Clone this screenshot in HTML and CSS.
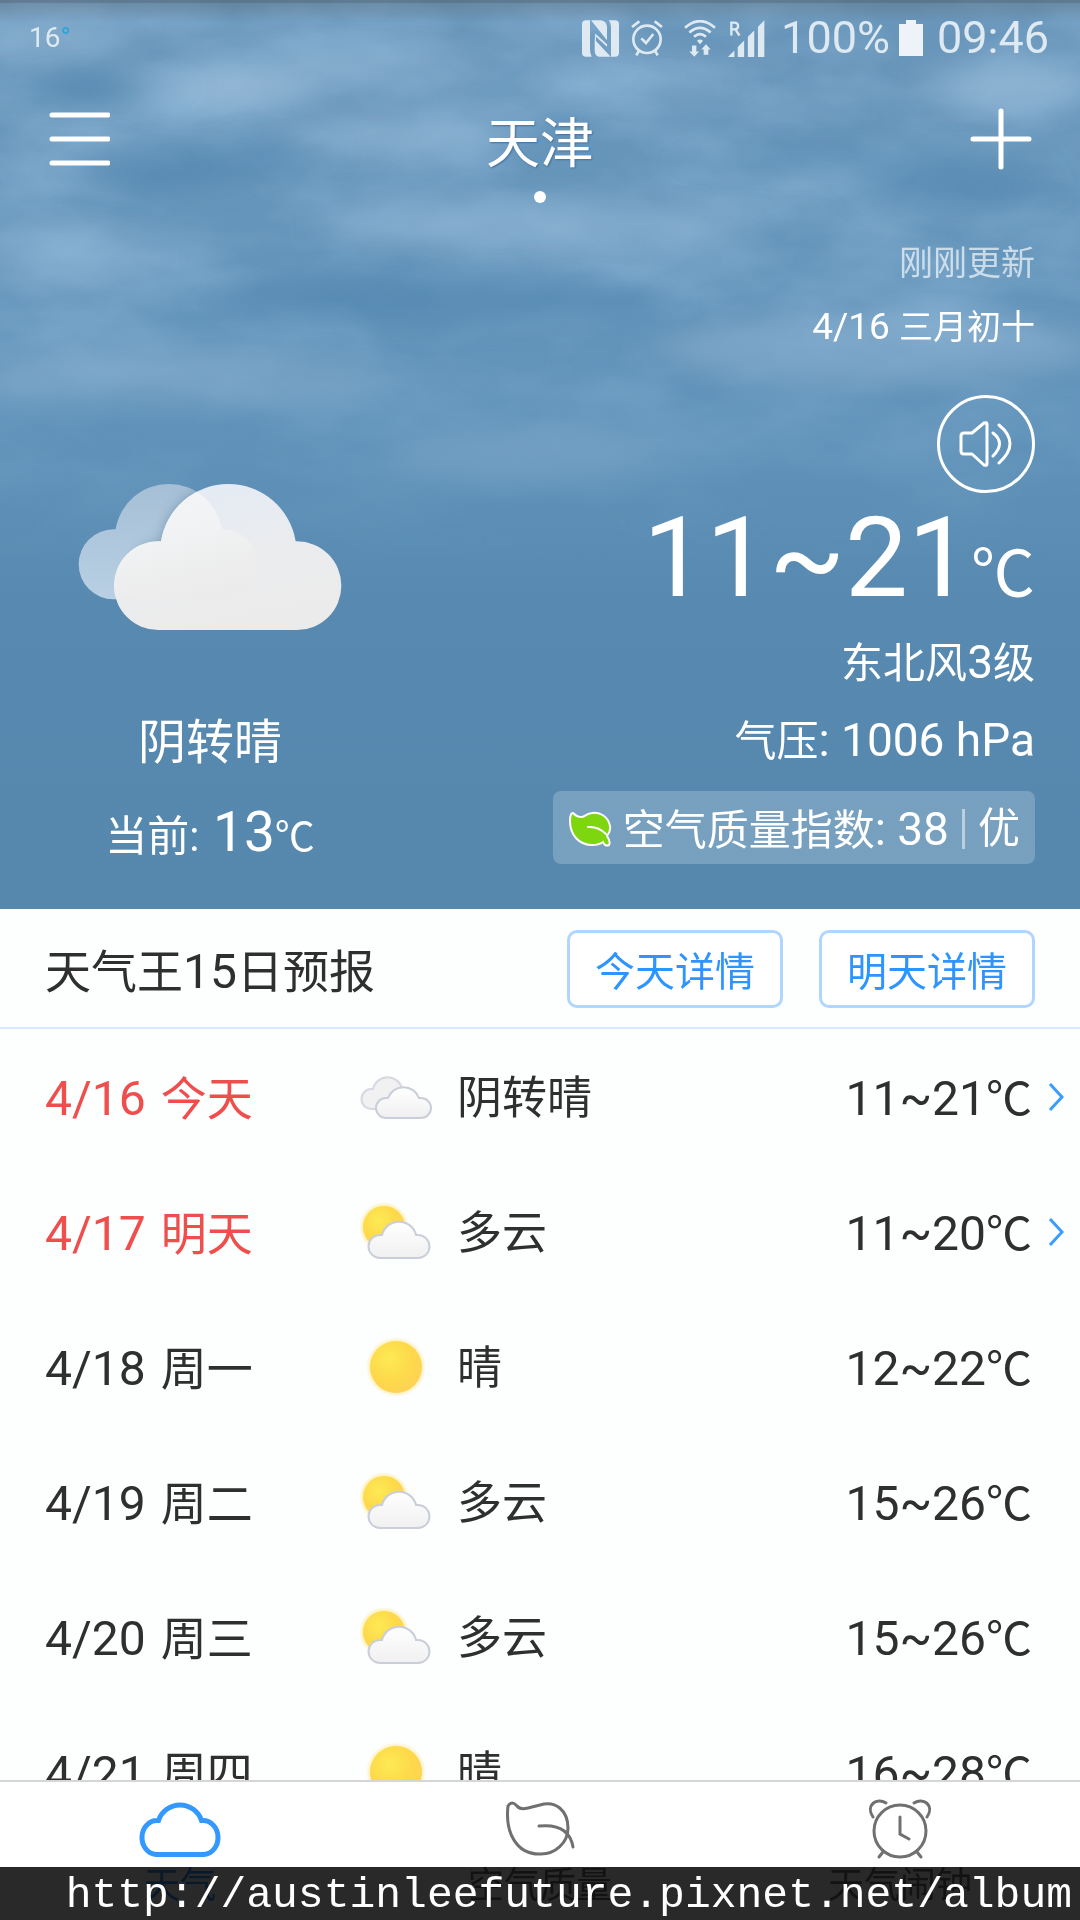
FILE: index.html
```html
<!DOCTYPE html>
<html lang="zh-CN">
<head>
<meta charset="utf-8">
<meta name="viewport" content="width=device-width, initial-scale=1">
<title>天气王 - 天津</title>
<link rel="stylesheet" href="styles.css">
</head>
<body>
<svg class="defs" aria-hidden="true">
  <defs>
    <linearGradient id="puff" x1="0" y1="0" x2="0" y2="1"><stop offset="0" stop-color="#fff"/><stop offset="1" stop-color="#f0f0f0"/></linearGradient>
    <radialGradient id="sunfill" cx=".38" cy=".35" r=".7"><stop offset="0" stop-color="#fdea55"/><stop offset=".6" stop-color="#fdd94a"/><stop offset="1" stop-color="#fed257"/></radialGradient>
    <radialGradient id="glow"><stop offset=".84" stop-color="#ffe680" stop-opacity=".6"/><stop offset="1" stop-color="#ffe680" stop-opacity="0"/></radialGradient>
    <symbol id="overcast" viewBox="0 0 72 60">
      <path d="M12 42a10 10 0 0 1-1-20h2a15 15 0 0 1 29-1l4 21z" fill="#f1f1f1" stroke="#d5d9e1" stroke-width="2"/>
      <path d="M26 51a10 10 0 0 1 0-20h2a16.500 16.500 0 0 1 31 0h2a10 10 0 0 1 0 20z" fill="url(#puff)" stroke="#c9ced9" stroke-width="2"/>
    </symbol>
    <symbol id="cloudy" viewBox="0 0 72 60">
      <circle cx="24" cy="25" r="25" fill="url(#glow)"/>
      <circle cx="24" cy="25" r="21" fill="url(#sunfill)"/>
      <path d="M20 56a11.500 11.500 0 0 1 0-23h2a17.500 17.500 0 0 1 34 0h2a11.500 11.500 0 0 1 0 23z" fill="url(#puff)" stroke="#c9ced9" stroke-width="2"/>
    </symbol>
    <symbol id="sunny" viewBox="0 0 72 60">
      <circle cx="36" cy="30" r="30" fill="url(#glow)"/>
      <circle cx="36" cy="30" r="26" fill="url(#sunfill)"/>
    </symbol>
  </defs>
</svg>

<div class="app">
  <header class="hero">
    <svg class="sky" viewBox="0 0 1080 909" preserveAspectRatio="none" aria-hidden="true">
      <defs>
        <linearGradient id="base" x1="0" y1="0" x2="0" y2="1"><stop offset="0" stop-color="#6996ba"/><stop offset=".3" stop-color="#6595bb"/><stop offset=".5" stop-color="#6092b9"/><stop offset=".66" stop-color="#588ab1"/><stop offset="1" stop-color="#5688ae"/></linearGradient>
        <linearGradient id="fade" x1="0" y1="0" x2="0" y2="1"><stop offset="0" stop-color="#fff"/><stop offset=".35" stop-color="#ddd"/><stop offset=".62" stop-color="#000"/></linearGradient>
        <linearGradient id="shade" x1="0" y1="0" x2="0" y2="1"><stop offset="0" stop-color="#555" stop-opacity=".3"/><stop offset="1" stop-color="#555" stop-opacity="0"/></linearGradient>
        <mask id="fadeMask"><rect width="1080" height="909" fill="url(#fade)"/></mask>
        <filter id="wisps" x="0" y="0" width="1" height="1" color-interpolation-filters="sRGB">
          <feTurbulence type="fractalNoise" baseFrequency=".006 .013" numOctaves="4" seed="7"/>
          <feColorMatrix values="0 0 0 0 .57  0 0 0 0 .73  0 0 0 0 .86  2.200 0 0 0 -.75"/>
        </filter>
        <filter id="soft" x="-1" y="-1" width="3" height="3"><feGaussianBlur stdDeviation="24 12"/></filter>
      </defs>
      <rect width="1080" height="909" fill="url(#base)"/>
      <g mask="url(#fadeMask)">
        <rect width="1080" height="909" filter="url(#wisps)" opacity=".55"/>
        <g filter="url(#soft)" fill="#a3c3de">
          <ellipse cx="225" cy="88" rx="100" ry="26" opacity=".65"/>
          <ellipse cx="370" cy="65" rx="110" ry="18" opacity=".35"/>
          <ellipse cx="40" cy="40" rx="80" ry="22" opacity=".4"/>
          <ellipse cx="1010" cy="86" rx="80" ry="26" opacity=".6"/>
          <ellipse cx="400" cy="135" rx="110" ry="22" opacity=".45"/>
          <ellipse cx="640" cy="75" rx="90" ry="20" opacity=".3"/>
          <ellipse cx="540" cy="225" rx="200" ry="26" opacity=".45"/>
          <ellipse cx="60" cy="255" rx="80" ry="30" opacity=".4"/>
          <ellipse cx="880" cy="350" rx="220" ry="34" opacity=".45"/>
          <ellipse cx="170" cy="380" rx="220" ry="28" opacity=".4"/>
          <ellipse cx="530" cy="460" rx="140" ry="28" opacity=".6"/>
        </g>
        <g filter="url(#soft)" fill="#4f84ae">
          <ellipse cx="90" cy="88" rx="80" ry="12" opacity=".6"/>
          <ellipse cx="160" cy="170" rx="80" ry="20" opacity=".6"/>
          <ellipse cx="270" cy="155" rx="40" ry="18" opacity=".6"/>
          <ellipse cx="860" cy="160" rx="180" ry="12" opacity=".45"/>
          <ellipse cx="960" cy="190" rx="90" ry="18" opacity=".5"/>
          <ellipse cx="440" cy="300" rx="220" ry="26" opacity=".6"/>
        </g>
      </g>
      <rect width="1080" height="22" fill="url(#shade)"/>
      <rect width="1080" height="3" fill="#44596a" opacity=".3"/>
    </svg>

    <div class="status">
      <span class="status-temp">16<i>°</i></span>
      <div class="status-icons">
        <svg class="s-nfc" viewBox="0 0 111 110" fill="currentColor"><path d="M12 0H24V86Q24 102 29 110H12Q0 110 0 98V12Q0 0 12 0ZM27 0H56Q74 2 75 20V60ZM38 58L86 110H50Q38 106 38 90ZM99 0H80Q87 8 87 24V110H99Q111 110 111 98V12Q111 0 99 0ZM40 40L75 72V80L42 50V62H38Z"/></svg>
        <svg class="s-alarm" viewBox="0 0 96 108" fill="none" stroke="currentColor" stroke-width="8"><circle cx="48" cy="58" r="41"/><path d="M31 55l14 14 22-27M3 21L25 4M71 4l22 17M24 92L16 106M72 92l8 14"/></svg>
        <svg class="s-wifi" viewBox="0 0 96 110" fill="none" stroke="currentColor" stroke-width="8"><path d="M3 23q45-40 90 0M16 37q32-28 64 0M30 50q18-16 36 0"/><path fill="currentColor" stroke="none" d="M39 62q9-8 18 0l-9 10zM24 76h13v18h8l-14 16-15-16h8zM59 104V88h-7l14-16 14 16h-7v16z"/></svg>
        <svg class="s-signal" viewBox="0 0 110 110" fill="currentColor"><path d="M0 110l19-19v19zM29 80l19-19v49H29zM59 50l19-19v79H59zM89 20l19-19v109H89z"/><path fill="none" stroke="currentColor" stroke-width="7" d="M10 46V8h8q12 0 12 10t-12 10h-8M22 28l12 18"/></svg>
        <span class="status-text">100%</span>
        <svg class="s-battery" viewBox="0 0 24 36" fill="#edf3f9"><path d="M7 0h10v4h7v32H0V4h7z"/></svg>
        <span class="status-text">09:46</span>
      </div>
    </div>

    <div class="appbar">
      <button class="icon-btn" aria-label="菜单"><svg viewBox="0 0 62 62"><path d="M4 7h56M4 31h56M4 55h56" stroke="#fff" stroke-width="5" stroke-linecap="round"/></svg></button>
      <div class="city"><h1>天津</h1><span class="dot"></span></div>
      <button class="icon-btn" aria-label="添加城市"><svg viewBox="0 0 62 62"><path d="M3 31h56M31 3v56" stroke="#fff" stroke-width="5" stroke-linecap="round"/></svg></button>
    </div>

    <div class="now">
      <section class="current">
        <svg class="big-cloud" viewBox="57 66 792 450" aria-hidden="true">
          <defs>
            <linearGradient id="bk" x1="0" y1="0" x2="0" y2="1"><stop offset="0" stop-color="#a5bfd6"/><stop offset="1" stop-color="#b9d0e3"/></linearGradient>
            <linearGradient id="fr" x1=".2" y1="0" x2=".5" y2="1"><stop offset="0" stop-color="#e3ebf5"/><stop offset=".55" stop-color="#ebecee"/><stop offset="1" stop-color="#ebebeb"/></linearGradient>
            <linearGradient id="ov" x1=".2" y1="0" x2=".6" y2="1"><stop offset="0" stop-color="#f4f5f7"/><stop offset=".5" stop-color="#f1f2f3"/><stop offset="1" stop-color="#ebebeb"/></linearGradient>
            <clipPath id="frc"><path d="M298 510A133 133 0 0 1 298 244H306A204.600 204.600 0 0 1 710 244H714A133 133 0 0 1 714 510Z"/></clipPath>
            <clipPath id="bkc"><path id="bkp" d="M164 418A105 105 0 0 1 164 208H170A161.500 161.500 0 0 1 489 208H490A105 105 0 0 1 490 418Z"/></clipPath>
            <filter id="sh" x="-.3" y="-.3" width="1.600" height="1.600"><feGaussianBlur stdDeviation="18"/></filter>
          </defs>
          <use href="#bkp" fill="url(#bk)"/>
          <g clip-path="url(#bkc)"><path d="M298 500A133 133 0 0 1 298 244H306A204.600 204.600 0 0 1 710 244Z" fill="#5b7f9d" opacity=".6" filter="url(#sh)"/></g>
          <path d="M298 510A133 133 0 0 1 298 244H306A204.600 204.600 0 0 1 710 244H714A133 133 0 0 1 714 510Z" fill="url(#fr)"/>
          <g clip-path="url(#frc)"><use href="#bkp" fill="url(#ov)"/></g>
        </svg>
        <p class="condition">阴转晴</p>
        <p class="nowtemp"><span class="lbl">当前:</span> 13<span class="unit">℃</span></p>
      </section>
      <section class="detail">
        <p class="updated">刚刚更新</p>
        <p class="date">4/16 <span>三月初十</span></p>
        <button class="speak" aria-label="语音播报"><svg viewBox="0 0 54 46" fill="none" stroke="#fff" stroke-width="3" stroke-linecap="round" stroke-linejoin="round"><path d="M2 15q0-3 3-3h8L25 2q3-1 3 1v40q0 2-3 1L13 33H5q-3 0-3-3zM34 12q13 10 0 23M40 4q22 18 0 38"/></svg></button>
        <p class="range">11~21<span class="unit">℃</span></p>
        <p class="line"><span class="han">东北风</span>3<span class="han">级</span></p>
        <p class="line"><span class="han">气压</span>: 1006 hPa</p>
        <a class="aqi" href="#air">
          <svg viewBox="0 0 44 36"><path d="M5 2Q2 2 2 10C2 24 11 34 24 34Q31 34 35 31Q37 36 41 34Q43 31 39 25Q43 20 42 15C40 4 30 1 24 2C17 3 17 6 13 6Q9 6 5 2Z" fill="#7ed60f" stroke="#fff" stroke-width="2"/><path d="M20 16Q30 15 38 23" fill="none" stroke="#fff" stroke-width="2" stroke-linecap="round"/></svg>
          <span><span class="han">空气质量指数</span>: 38</span>
          <i class="bar"></i>
          <span class="han">优</span>
        </a>
      </section>
    </div>
  </header>

  <main class="forecast">
    <div class="head">
      <h2><span>天气王</span>15<span>日预报</span></h2>
      <button class="pill">今天详情</button>
      <button class="pill">明天详情</button>
    </div>
    <ul class="days">
      <li class="soon"><span class="day">4/16 <b>今天</b></span><svg class="wx"><use href="#overcast"/></svg><span class="sky-text">阴转晴</span><span class="temps">11~21<i>℃</i></span><svg class="chev" viewBox="0 0 16 30"><path d="M2 2l12 13L2 28"/></svg></li>
      <li class="soon"><span class="day">4/17 <b>明天</b></span><svg class="wx"><use href="#cloudy"/></svg><span class="sky-text">多云</span><span class="temps">11~20<i>℃</i></span><svg class="chev" viewBox="0 0 16 30"><path d="M2 2l12 13L2 28"/></svg></li>
      <li><span class="day">4/18 <b>周一</b></span><svg class="wx"><use href="#sunny"/></svg><span class="sky-text">晴</span><span class="temps">12~22<i>℃</i></span></li>
      <li><span class="day">4/19 <b>周二</b></span><svg class="wx"><use href="#cloudy"/></svg><span class="sky-text">多云</span><span class="temps">15~26<i>℃</i></span></li>
      <li><span class="day">4/20 <b>周三</b></span><svg class="wx"><use href="#cloudy"/></svg><span class="sky-text">多云</span><span class="temps">15~26<i>℃</i></span></li>
      <li><span class="day">4/21 <b>周四</b></span><svg class="wx"><use href="#sunny"/></svg><span class="sky-text">晴</span><span class="temps">16~28<i>℃</i></span></li>
    </ul>
  </main>

  <nav class="tabs">
    <a class="active" href="#weather"><svg viewBox="0 0 82 60"><path d="M17 55.500a15 17 0 0 1 2-34h.5A22.700 22.700 0 0 1 62.500 21.500h.5a15 17 0 0 1 2 34z" fill="none" stroke="#3399ff" stroke-width="5"/></svg>天气</a>
    <a href="#air"><svg viewBox="0 0 82 60"><g fill="none" stroke="#707070" stroke-width="3" stroke-linecap="round"><path d="M9 7Q13 1 18 7Q21 11 29 9L41 6C57 1 69 12 69 29C69 44 56 55 42 55C17 56 6 33 9 7Z"/><path d="M40 27Q70 24 74 48"/></g></svg>空气质量</a>
    <a href="#alarm"><svg viewBox="0 0 82 60"><g fill="none" stroke="#707070" stroke-width="3" stroke-linecap="round"><circle cx="41" cy="32" r="26"/><path d="M41 18v17l9 5M24 53l-4 5M58 53l4 5M14 18C6 6 18-2 27 4M68 18C76 6 64-2 55 4"/></g></svg>天气闹钟</a>
  </nav>
  <div class="watermark">http://austinleefuture.pixnet.net/album</div>
</div>
</body>
</html>
```
FILE: styles.css
```css
* { box-sizing: border-box; margin: 0; padding: 0; }

body {
  font-family: Roboto, "Noto Sans CJK SC", sans-serif;
  color: #2f2f2f;
  background: #fdfefe;
}

h1, h2, b { font-weight: 400; }
i { font-style: normal; }
a { color: inherit; text-decoration: none; }
button { font: inherit; color: inherit; background: none; border: 0; cursor: pointer; }
svg { display: block; flex: none; }
.defs { position: absolute; width: 0; height: 0; }

.app {
  position: relative;
  display: flex;
  flex-direction: column;
  height: 100vh;
  overflow: hidden;
}

/* Hero */
.hero { position: relative; flex: none; color: #fff; }
.sky { position: absolute; inset: 0; width: 100%; height: 100%; z-index: -1; }

.status {
  display: flex;
  justify-content: space-between;
  align-items: center;
  height: 76px;
  padding: 0 31px 0 29px;
  color: #dfe9f2;
}
.status-temp { display: flex; font: 28px/28px "Liberation Sans Narrow", Roboto, sans-serif; }
.status-temp i { color: #29a3dc; }
.status-icons { display: flex; align-items: center; }
.status-text { font-size: 45px; line-height: 76px; }
.s-nfc { width: 37px; height: 37px; margin-right: 12px; }
.s-alarm { width: 32px; height: 36px; margin-right: 21px; }
.s-wifi { width: 32px; height: 37px; margin-right: 12px; }
.s-signal { width: 37px; height: 37px; margin-right: 16px; }
.s-battery { width: 24px; height: 36px; margin: 0 14px 0 9px; }

.appbar {
  display: flex;
  justify-content: space-between;
  align-items: flex-start;
  height: 155px;
  padding: 32px 48px 0;
}
.icon-btn svg { width: 62px; height: 62px; }
.city { display: flex; flex-direction: column; align-items: center; gap: 11px; padding-top: 2px; }
.city h1 { font-size: 54px; line-height: 70px; text-shadow: 1px 1px 2px #4070a0; }
.dot { width: 12px; height: 12px; border-radius: 50%; background: #fff; }

.now {
  display: flex;
  justify-content: space-between;
  align-items: flex-end;
  padding-right: 45px;
}
.current {
  display: flex;
  flex-direction: column;
  align-items: center;
  width: 420px;
  padding-bottom: 32px;
}
.big-cloud { width: 264px; height: 150px; margin-bottom: 67px; }
.condition { font-size: 48px; line-height: 88px; }
.nowtemp { font-size: 55px; line-height: 90px; }
.nowtemp .lbl { font-size: 42px; line-height: 1; }
.nowtemp .unit { font-size: 40px; line-height: 1; }

.detail {
  display: flex;
  flex-direction: column;
  align-items: flex-end;
  padding-bottom: 45px;
}
.updated { font-size: 34px; line-height: 64px; opacity: .65; }
.date { font-size: 37px; line-height: 64px; }
.date span { font-size: 34px; line-height: 1; }
.speak {
  display: grid;
  place-items: center;
  width: 98px;
  height: 98px;
  margin-top: 36px;
  border: 3px solid #fff;
  border-radius: 50%;
}
.speak svg { width: 54px; height: 46px; }
.range { font-size: 112px; line-height: 130px; }
.range .unit { font-size: 64px; line-height: 1; }
.line { font-size: 46px; line-height: 78px; }
.han { font-size: 42px; line-height: 1; }
.aqi {
  display: flex;
  align-items: center;
  height: 73px;
  margin-top: 12px;
  padding: 2px 15px 0;
  border-radius: 8px;
  background: rgba(255, 255, 255, .2);
  font-size: 46px;
}
.aqi svg { width: 44px; height: 36px; margin-right: 11px; }
.bar { width: 3px; height: 40px; margin: 0 13px; background: rgba(255, 255, 255, .5); }

/* Forecast */
.forecast { flex: 1; min-height: 0; overflow: hidden; }
.head {
  display: flex;
  align-items: center;
  gap: 36px;
  height: 120px;
  padding: 2px 45px 0;
  border-bottom: 2px solid #d8eaff;
}
.head h2 { flex: 1; padding-top: 6px; font-size: 48px; line-height: 72px; }
.head h2 span, .days b { font-size: 46px; line-height: 1; }
.pill {
  width: 216px;
  height: 78px;
  border: 3px solid #b0d6ff;
  border-radius: 10px;
  background: #fff;
  color: #2e94ff;
  font-size: 40px;
}

.days { list-style: none; }
.days li {
  display: grid;
  grid-template-columns: 315px 97px 1fr auto 48px;
  align-items: center;
  height: 135px;
  padding: 1px 0 0 45px;
  font-size: 48px;
  line-height: 72px;
}
.days span { padding-top: 4px; }
.days b { margin-left: 3px; }
.days i { font-size: 46px; line-height: 1; }
.soon .day { color: #f04d4d; }
.wx { width: 72px; height: 60px; }
.days .sky-text { font-size: 45px; }
.chev {
  justify-self: center;
  width: 16px;
  height: 30px;
  fill: none;
  stroke: #3b9cff;
  stroke-width: 3;
}

/* Bottom tabs */
.tabs {
  display: grid;
  grid-template-columns: 1fr 1fr 1fr;
  flex: none;
  height: 140px;
  padding-top: 17px;
  border-top: 2px solid #d6d6d6;
  background: #fff;
}
.tabs a {
  display: flex;
  flex-direction: column;
  align-items: center;
  gap: 1px;
  font-size: 36px;
  line-height: 52px;
  color: #707070;
}
.tabs svg { width: 82px; height: 60px; overflow: visible; }
.tabs .active { color: #3399ff; }

.watermark {
  position: absolute;
  right: 0;
  bottom: 0;
  left: 0;
  padding: 4px 8px 0 0;
  background: rgba(0, 0, 0, .84);
  color: #fff;
  font: 43px/49px "Liberation Mono", "Courier New", monospace;
  text-align: right;
  white-space: nowrap;
}
```
